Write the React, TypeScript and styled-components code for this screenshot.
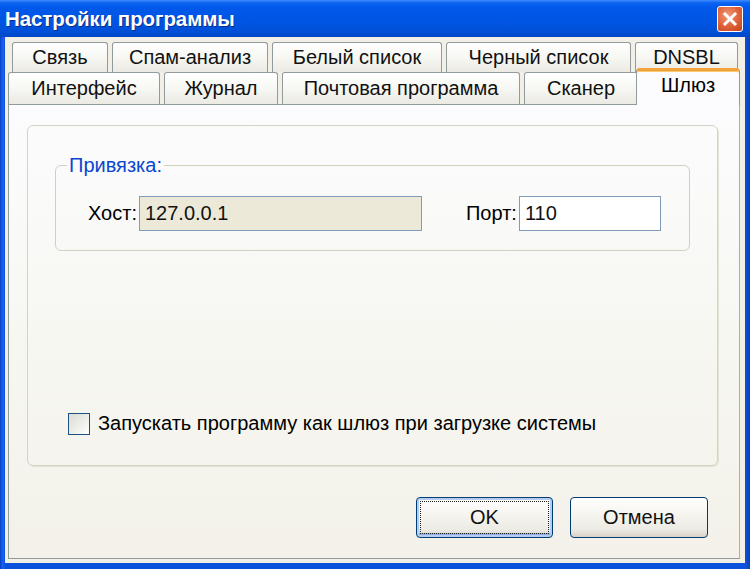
import React from "react";
import styled, { createGlobalStyle } from "styled-components";

const Global = createGlobalStyle`
  html, body { margin: 0; padding: 0; background: #0a3fc0; }
  body { font-family: "Liberation Sans", Arial, sans-serif; font-size: 20px; color: #000; }
  * { box-sizing: border-box; }
`;

const Window = styled.div`
  width: 750px;
  height: 569px;
  display: flex;
  flex-direction: column;
  background: linear-gradient(90deg, #0842c8 0px, #1d64f0 3px, #0a52dc 5px, #0a52dc 745px, #0a3fb8 750px);
  overflow: hidden;
`;

const TitleBar = styled.div`
  height: 37px;
  flex: none;
  display: flex;
  align-items: center;
  justify-content: space-between;
  padding: 0 7px 0 5px;
  background: linear-gradient(180deg, #3d8bff 0px, #0a62f0 3px, #0058ea 8px, #0054e0 24px, #0050d6 32px, #0046c4 37px);
`;

const Title = styled.span`
  color: #fff;
  font-weight: bold;
  font-size: 20.5px;
  letter-spacing: -0.1px;
  text-shadow: 1px 1px 0 #0a2c8a;
`;

const CloseBtn = styled.div`
  width: 26px;
  height: 26px;
  border: 1px solid #fff;
  border-radius: 3px;
  background: radial-gradient(circle at 40% 35%, #f09a78 0%, #e0643c 50%, #c2401a 100%);
  display: flex;
  align-items: center;
  justify-content: center;
`;

const Body = styled.div`
  flex: 1;
  margin: 0 5px 6px 5px;
  background: #f2f0e6;
  display: flex;
  flex-direction: column;
  padding: 5px 5px 4px 3px;
`;

const TabRow = styled.div<{ $pad: number; $h: number }>`
  display: flex;
  gap: 4px;
  padding-left: ${(p) => p.$pad}px;
  height: ${(p) => p.$h}px;
  align-items: flex-end;
`;

const Tab = styled.div<{ $w: number }>`
  width: ${(p) => p.$w}px;
  height: 100%;
  flex: none;
  border: 1px solid #919b9c;
  border-bottom: none;
  border-radius: 3px 3px 0 0;
  background: linear-gradient(180deg, #ffffff 0%, #f7f7f3 50%, #ebeae3 100%);
  display: flex;
  align-items: center;
  justify-content: center;
  font-size: 20px;
  color: #111;
`;

const ActiveTab = styled.div<{ $w: number }>`
  width: ${(p) => p.$w}px;
  height: 37px;
  margin-top: -4px;
  margin-left: -6px;
  margin-bottom: -2px;
  flex: none;
  align-self: flex-start;
  border: 1px solid #919b9c;
  border-top: 3px solid #f3a33c;
  border-bottom: none;
  border-radius: 4px 4px 0 0;
  background: #fcfcfe;
  display: flex;
  align-items: flex-start;
  justify-content: center;
  padding-top: 3px;
  font-size: 20px;
  position: relative;
  z-index: 2;
  box-shadow: inset 0 1px 0 #ffc873;
`;

const Page = styled.div`
  flex: 1;
  border: 1px solid #919b9c;
  border-right-color: #a9b0b0;
  background: linear-gradient(180deg, #fcfcfe 0%, #f7f7f2 50%, #f3f1e9 100%);
  display: flex;
  flex-direction: column;
  padding: 20px 21px 0 18px;
`;

const Panel = styled.div`
  height: 341px;
  border: 1px solid #d6d3c4;
  border-radius: 6px;
  display: flex;
  flex-direction: column;
  padding: 28px 27px 0 27px;
  box-shadow: 1px 1px 0 #e6e3d6;
`;

const Group = styled.fieldset`
  margin: 0;
  height: 97px;
  border: 1px solid #d0d0bf;
  border-radius: 6px;
  padding: 0;
  display: flex;
  align-items: flex-start;
  align-self: stretch;
`;

const Legend = styled.legend`
  margin-left: 11px;
  padding: 0 2px;
  color: #0a46d0;
  font-size: 20px;
  line-height: 23px;
`;

const FieldRow = styled.div`
  display: flex;
  align-items: center;
  height: 35px;
  margin-top: 19px;
  padding-left: 32px;
`;

const Label = styled.span<{ $gap: number; $lead?: number }>`
  margin-right: ${(p) => p.$gap}px;
  margin-left: ${(p) => p.$lead ?? 0}px;
  font-size: 20px;
`;

const Input = styled.div<{ $w: number; $disabled?: boolean }>`
  width: ${(p) => p.$w}px;
  height: 35px;
  border: 1px solid #7f9db9;
  background: ${(p) => (p.$disabled ? "#ece9d9" : "#ffffff")};
  display: flex;
  align-items: center;
  padding-left: 5px;
  font-size: 20px;
  color: #111;
`;

const Spacer = styled.div`
  flex: 1;
`;

const CheckRow = styled.label`
  display: flex;
  align-items: center;
  gap: 8px;
  margin-left: 13px;
  margin-bottom: 30px;
  font-size: 20px;
`;

const Box = styled.span`
  width: 22px;
  height: 22px;
  border: 1px solid #1c5180;
  background: linear-gradient(135deg, #dcdcd6 0%, #f0f0ec 60%, #ffffff 100%);
`;

const Buttons = styled.div`
  display: flex;
  justify-content: flex-end;
  gap: 17px;
  padding-right: 10px;
  margin-top: 31px;
`;

const Button = styled.div<{ $w: number; $default?: boolean }>`
  width: ${(p) => p.$w}px;
  height: 41px;
  border: 1px solid #003c74;
  border-radius: 4px;
  background: linear-gradient(180deg, #ffffff 0%, #f6f5f0 40%, #ecebe4 80%, #d8d3c8 100%);
  display: flex;
  align-items: center;
  justify-content: center;
  font-size: 20px;
  color: #111;
  ${(p) =>
    p.$default
      ? `box-shadow: inset 0 0 0 2px #b6cdf2, inset 0 -2px 0 2px #8eaee8;
         outline: 1px dotted #222; outline-offset: -5px;`
      : ``}
`;

const row1 = [
  { t: "Связь", w: 96 },
  { t: "Спам-анализ", w: 156 },
  { t: "Белый список", w: 170 },
  { t: "Черный список", w: 185 },
  { t: "DNSBL", w: 103 },
];
const row2 = [
  { t: "Интерфейс", w: 152 },
  { t: "Журнал", w: 114 },
  { t: "Почтовая программа", w: 238 },
  { t: "Сканер", w: 114 },
];

export default function App() {
  return (
    <>
      <Global />
      <Window>
        <TitleBar>
          <Title>Настройки программы</Title>
          <CloseBtn>
            <svg width="16" height="16" viewBox="0 0 16 16">
              <path d="M3 3 L13 13 M13 3 L3 13" stroke="#fff" strokeWidth="3" strokeLinecap="square" />
            </svg>
          </CloseBtn>
        </TitleBar>
        <Body>
          <TabRow $pad={4} $h={30}>
            {row1.map((r) => (
              <Tab key={r.t} $w={r.w}>{r.t}</Tab>
            ))}
          </TabRow>
          <TabRow $pad={0} $h={32}>
            {row2.map((r) => (
              <Tab key={r.t} $w={r.w}>{r.t}</Tab>
            ))}
            <ActiveTab $w={104}>Шлюз</ActiveTab>
          </TabRow>
          <Page>
            <Panel>
              <Group>
                <Legend>Привязка:</Legend>
                <FieldRow>
                  <Label $gap={2}>Хост:</Label>
                  <Input $w={283} $disabled>127.0.0.1</Input>
                  <Label $gap={2} $lead={44}>Порт:</Label>
                  <Input $w={142}>110</Input>
                </FieldRow>
              </Group>
              <Spacer />
              <CheckRow>
                <Box />
                Запускать программу как шлюз при загрузке системы
              </CheckRow>
            </Panel>
            <Buttons>
              <Button $w={137} $default>OK</Button>
              <Button $w={138}>Отмена</Button>
            </Buttons>
          </Page>
        </Body>
      </Window>
    </>
  );
}
